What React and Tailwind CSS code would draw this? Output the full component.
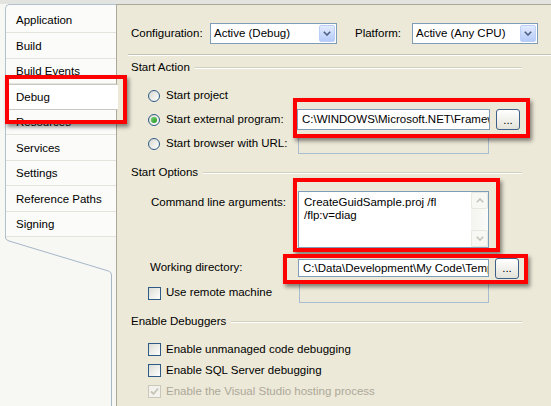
import React from "react";

const tabs = [
  "Application",
  "Build",
  "Build Events",
  "Debug",
  "Resources",
  "Services",
  "Settings",
  "Reference Paths",
  "Signing",
];

const Chevron = ({ up = false, color = "#4d6185" }) => (
  <svg width="8" height="5" viewBox="0 0 8 5">
    <polyline
      points={up ? "0.8,4.2 4,1 7.2,4.2" : "0.8,0.8 4,4 7.2,0.8"}
      fill="none"
      stroke={color}
      strokeWidth="1.6"
    />
  </svg>
);

const Combo = ({ value, className }) => (
  <div className={`flex h-[21px] items-center border border-[#7f9db9] bg-white ${className}`}>
    <span className="flex-1 truncate pl-[3px]">{value}</span>
    <span className="m-px flex h-[17px] w-[16px] items-center justify-center rounded-[2px] border border-[#bccff8] bg-gradient-to-b from-[#e2eafe] to-[#b6cbf9]">
      <Chevron />
    </span>
  </div>
);

const TextBox = ({ value, disabled, className }) => (
  <div
    className={`overflow-hidden whitespace-nowrap border pl-[4px] ${
      disabled ? "border-[#a9bdd0] bg-[#ece9d8]" : "border-[#7f9db9] bg-white"
    } ${className}`}
  >
    {value}
  </div>
);

const Browse = () => (
  <div className="ml-[6px] flex h-[21px] w-[24px] items-end justify-center rounded-[3px] border border-[#3d5f8a] bg-gradient-to-b from-white to-[#e4e3da] pb-[3px] leading-none">
    ...
  </div>
);

const Radio = ({ checked }) => (
  <span className="flex h-[12px] w-[12px] shrink-0 items-center justify-center rounded-full border border-[#2f5a86] bg-gradient-to-br from-[#d8d8d0] to-white">
    {checked && <span className="h-[6px] w-[6px] rounded-full bg-gradient-to-br from-[#6fd46f] to-[#1e951e]" />}
  </span>
);

const Check = ({ checked, disabled }) => (
  <span
    className={`flex h-[13px] w-[13px] shrink-0 items-center justify-center border ${
      disabled ? "border-[#cac8bb] bg-[#f3f2ec]" : "border-[#2f5a86] bg-gradient-to-br from-[#dcdcd5] to-white"
    }`}
  >
    {checked && (
      <svg width="9" height="9" viewBox="0 0 9 9">
        <polyline points="1,4.5 3.5,7 8,1.5" fill="none" stroke="#c6c5b8" strokeWidth="1.8" />
      </svg>
    )}
  </span>
);

const GroupHeader = ({ title, className }) => (
  <div className={`flex h-[14px] items-center ${className}`}>
    <span className="whitespace-nowrap">{title}</span>
    <span className="ml-[5px] mr-[29px] h-[2px] flex-1 border-t border-b border-t-[#d0d0bf] border-b-white" />
  </div>
);

const RedBox = ({ className }) => (
  <div
    className={`pointer-events-none absolute z-20 border-4 border-[#ff0000] shadow-[2px_3px_4px_rgba(0,0,0,0.45)] ${className}`}
  />
);

export default function App() {
  return (
    <div className="relative flex h-[406px] w-[551px] flex-col overflow-hidden bg-[#f7f7f4] font-['Liberation_Sans',Arial,sans-serif] text-[11.5px] text-black">
      <div className="h-[4px] shrink-0 bg-[#e3e3df]" />
      <div className="flex flex-1">
        {/* Tab strip */}
        <div className="flex w-[116px] shrink-0 flex-col pl-[5px]">
          <div className="rounded-tl-[5px] border-l border-t border-[#b3c0cd] bg-[#fbfbf9] pt-[2.5px]">
            {tabs.map((t) =>
              t === "Debug" ? (
                <div
                  key={t}
                  className="relative z-10 -mr-[2px] flex h-[25.5px] items-center border-y border-[#c9c9c2] bg-white pl-[10px] pt-[2px]"
                >
                  {t}
                </div>
              ) : (
                <div key={t} className="flex h-[25.5px] items-center border-b border-[#e4e4dc] pl-[10px] pt-[2px]">
                  {t}
                </div>
              )
            )}
          </div>
          <svg width="111" height="170" viewBox="0 0 111 170" className="shrink-0">
            <path
              d="M0.5 0 L0.5 1 Q1 3 4 4 L103.5 34 Q106.5 35 106.5 38 L106.5 170"
              fill="none"
              stroke="#a6b6c7"
              strokeWidth="1"
            />
          </svg>
        </div>

        {/* Property page */}
        <div className="flex flex-1 flex-col border-l border-t border-[#aca899] bg-[#ece9d8] pl-[14px] pt-[18px]">
          <div className="flex h-[21px] items-center">
            <span className="w-[79px]">Configuration:</span>
            <Combo value="Active (Debug)" className="w-[127px]" />
            <span className="ml-[18px] w-[57px]">Platform:</span>
            <Combo value="Active (Any CPU)" className="w-[126px]" />
          </div>

          <div className="-ml-[3px] mt-[10px] h-[2px] border-t border-b border-t-[#c5c2b2] border-b-white" />

          <GroupHeader title="Start Action" className="mt-[5px]" />

          <div className="ml-[17px] mt-[11px] flex h-[20px] items-center">
            <Radio />
            <span className="ml-[6px]">Start project</span>
          </div>
          <div className="ml-[17px] mt-[3px] flex h-[21px] items-center">
            <div className="flex w-[149px] items-center">
              <Radio checked />
              <span className="ml-[6px] whitespace-nowrap">Start external program:</span>
            </div>
            <TextBox value="C:\WINDOWS\Microsoft.NET\Framewo" className="h-[21px] w-[193px] leading-[19px]" />
            <Browse />
          </div>
          <div className="ml-[17px] mt-[4px] flex h-[20px] items-center">
            <div className="flex w-[150px] items-center">
              <Radio />
              <span className="ml-[6px] whitespace-nowrap">Start browser with URL:</span>
            </div>
            <TextBox value="" disabled className="h-[19px] w-[191px]" />
          </div>

          <GroupHeader title="Start Options" className="mt-[12px]" />

          <div className="ml-[20px] mt-[11px] flex h-[57px]">
            <span className="w-[147px] pt-[3px]">Command line arguments:</span>
            <div className="flex w-[191px] border border-[#7f9db9] bg-white">
              <div className="flex-1 pl-[5px] pt-[4px] leading-[13px]">
                CreateGuidSample.proj /fl
                <br />
                /flp:v=diag
              </div>
              <div className="flex w-[17px] flex-col justify-between bg-gradient-to-r from-[#f3f3ef] to-[#fbfbf9]">
                <div className="flex h-[17px] items-center justify-center rounded-[2px] border border-[#e8e7e0] bg-[#f7f7f4]">
                  <Chevron up color="#c4c3ba" />
                </div>
                <div className="flex h-[17px] items-center justify-center rounded-[2px] border border-[#e8e7e0] bg-[#f7f7f4]">
                  <Chevron color="#c4c3ba" />
                </div>
              </div>
            </div>
          </div>

          <div className="ml-[19px] mt-[10px] flex h-[20px] items-center">
            <span className="w-[148px]">Working directory:</span>
            <TextBox value="C:\Data\Development\My Code\Temp" className="h-[18px] w-[191px] leading-[16px]" />
            <Browse />
          </div>

          <div className="ml-[17px] mt-[5px] flex h-[20px] items-center">
            <div className="flex w-[151px] items-center">
              <Check />
              <span className="ml-[5px]">Use remote machine</span>
            </div>
            <TextBox value="" disabled className="h-[20px] w-[190px]" />
          </div>

          <GroupHeader title="Enable Debuggers" className="mt-[12px]" />

          <div className="ml-[17px] mt-[10px] flex h-[21px] items-center">
            <Check />
            <span className="ml-[5px]">Enable unmanaged code debugging</span>
          </div>
          <div className="ml-[17px] flex h-[21px] items-center">
            <Check />
            <span className="ml-[5px]">Enable SQL Server debugging</span>
          </div>
          <div className="ml-[17px] flex h-[21px] items-center">
            <Check checked disabled />
            <span className="ml-[5px] whitespace-nowrap text-[#aca899]">Enable the Visual Studio hosting process</span>
          </div>
        </div>
      </div>

      {/* Annotation boxes */}
      <RedBox className="left-[5px] top-[75px] h-[49px] w-[122px]" />
      <RedBox className="left-[293px] top-[98px] h-[40px] w-[237px]" />
      <RedBox className="left-[293px] top-[178px] h-[74px] w-[207px]" />
      <RedBox className="left-[283px] top-[254px] h-[30px] w-[245px]" />
    </div>
  );
}
